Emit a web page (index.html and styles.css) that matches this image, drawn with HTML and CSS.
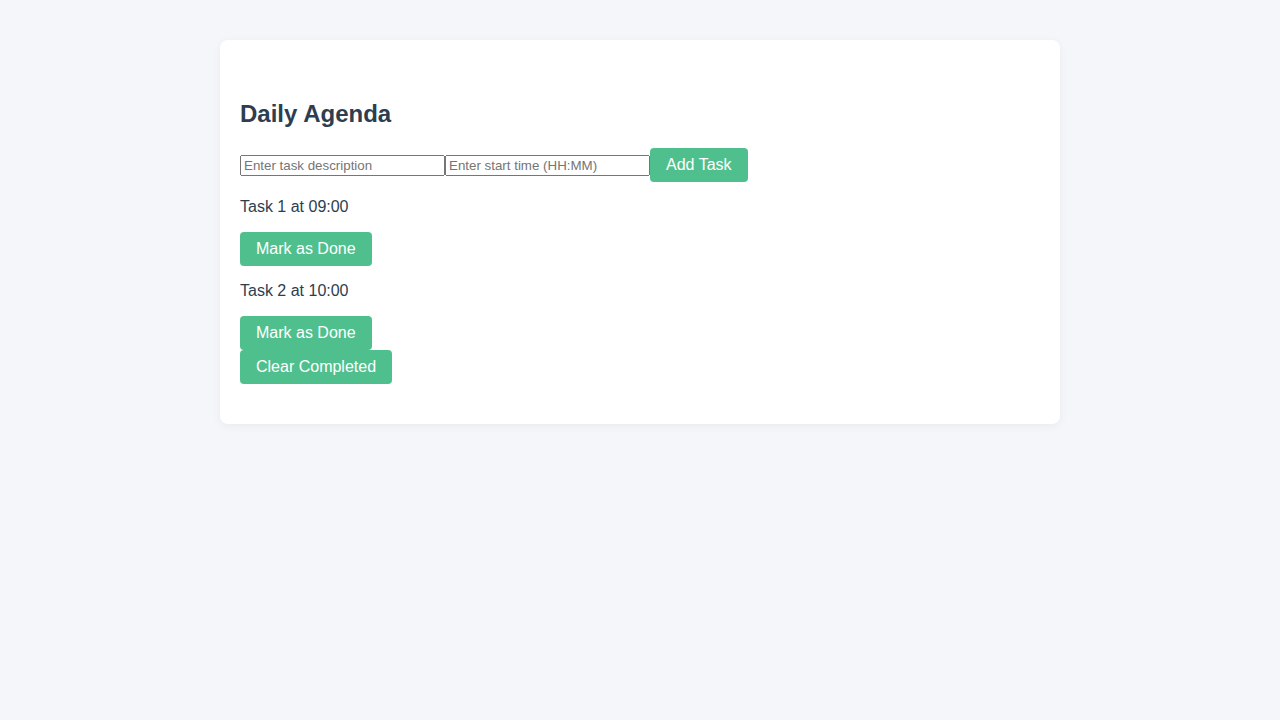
FILE: index.html
```html
<!DOCTYPE html>
<html lang="en">
<head>
<meta charset="utf-8">
<title>Daily Agenda</title>
<link rel="stylesheet" href="styles.css">
</head>
<body>
<div class="card">
  <h2 class="title">Daily Agenda</h2>
  <div class="form-row">
    <input class="field" type="text" placeholder="Enter task description">
    <input class="field" type="text" placeholder="Enter start time (HH:MM)">
    <button class="btn">Add Task</button>
  </div>
  <div class="tasks">
    <div class="task">
      <p class="task-text">Task 1 at 09:00</p>
      <button class="btn">Mark as Done</button>
    </div>
    <div class="task">
      <p class="task-text">Task 2 at 10:00</p>
      <button class="btn">Mark as Done</button>
    </div>
    <button class="btn">Clear Completed</button>
  </div>
</div>
</body>
</html>
```
FILE: styles.css
```css
html, body {
  margin: 0;
  padding: 0;
}
body {
  background: #f5f6fa;
  font-family: "Liberation Sans", Arial, sans-serif;
  color: #2c3e50;
  padding: 40px 0;
}
.card {
  width: 800px;
  margin: 0 auto;
  background: #fff;
  border-radius: 8px;
  box-shadow: 0 2px 10px rgba(0, 0, 0, 0.05);
  padding: 40px 20px;
}
.title {
  font-size: 24px;
  font-weight: bold;
  margin: 20px 0 20px;
  color: #2c3e50;
}
.form-row {
  display: flex;
  align-items: center;
}
.field {
  width: 197px;
  font-family: "Liberation Sans", Arial, sans-serif;
  font-size: 13.333px;
  margin: 0;
}
.tasks {
  display: flex;
  flex-direction: column;
  align-items: flex-start;
}
.task {
  display: flex;
  flex-direction: column;
  align-items: flex-start;
}
.task-text {
  margin: 16px 0;
  font-size: 16px;
  line-height: 18px;
}
.btn {
  background: #4fc08d;
  color: #fff;
  border: none;
  border-radius: 4px;
  padding: 8px 16px;
  font-family: "Liberation Sans", Arial, sans-serif;
  font-size: 16px;
  line-height: 18px;
  cursor: pointer;
  margin: 0;
}
```
